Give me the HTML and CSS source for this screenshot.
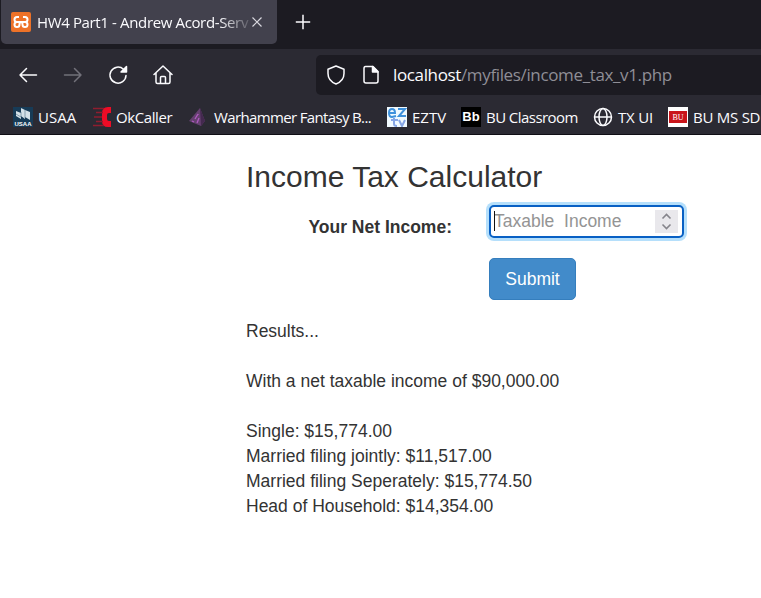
FILE: index.html
```
<!DOCTYPE html>
<html lang="en">
<head>
<meta charset="utf-8">
<title>Income Tax Calculator</title>
<link rel="stylesheet" href="styles.css">
</head>
<body>
<header class="browser">
  <div class="tabs">
    <div class="tab">
      <svg class="favicon" viewBox="0 0 20 20"><rect width="20" height="20" rx="2" fill="#ee7228"/><path d="M8 5H6Q3.500 5 3.500 7.500 3.500 10 6 10q-2.500 0-2.500 2.500T6 15q2.500 0 2.500-2.500 0-2.500 1.500-2.500t1.500 2.500Q11.500 15 14 15t2.500-2.500Q16.500 10 14 10q2.500 0 2.500-2.500Q16.500 5 14 5h-2M6 10h8" fill="none" stroke="#fff" stroke-width="2"/></svg>
      <span class="tab-title">HW4 Part1 - Andrew Acord-Serv</span>
      <svg class="close" viewBox="0 0 10 10"><path d="M.5.5l9 9m0-9l-9 9" fill="none" stroke="#d9d8df" stroke-width="1.200"/></svg>
    </div>
    <svg class="plus" viewBox="0 0 16 16"><path d="M8 .8v14.400M.8 8h14.400" fill="none" stroke="#fbfbfe" stroke-width="1.500"/></svg>
  </div>
  <nav class="toolbar">
    <svg class="tool" viewBox="0 0 20 20"><path d="M18.500 10H2m6.500-6.500L2 10l6.500 6.500"/></svg>
    <svg class="tool disabled" viewBox="0 0 20 20"><path d="M1.500 10H18m-6.500-6.500L18 10l-6.500 6.500"/></svg>
    <svg class="tool" viewBox="0 0 20 20"><path d="M18 10.500A8 8 0 1 1 15.500 4.300"/><path class="solid" d="M18.500 1.500v5.500H13z"/></svg>
    <svg class="tool" viewBox="0 0 20 20"><path d="M1 9.500l9-8.500 9 8.500M3 8v9q0 1.500 1.500 1.500h11q1.500 0 1.500-1.500V8M7.500 18.500v-6q0-1 1-1h3q1 0 1 1v6"/></svg>
    <div class="address">
      <svg class="tool" viewBox="0 0 20 20"><path d="M10 1l8 3.200v4.300c0 4.500-3 8.500-8 10.500-5-2-8-6-8-10.500V4.200z"/></svg>
      <svg class="tool page" viewBox="0 0 20 20"><path d="M4.500 1.500H12l5 5V16q0 2-2 2H5q-2 0-2-2V3.500q0-2 1.500-2z"/><path class="solid" d="M11.500 1.500v5.500H17z"/></svg>
      <span class="url"><b>localhost</b>/myfiles/income_tax_v1.php</span>
    </div>
  </nav>
  <div class="bookmarks">
    <div class="bm usaa"><svg viewBox="0 0 20 20"><rect width="20" height="20" fill="#173b57"/><path d="M3 4l5 2V1l4 2 5 2v8l-5-3v2L8 9v3L3 9z" fill="#d5e1e8"/><path d="M8 5v5m4-7v8M3 7l5 3" stroke="#6f8ca0" stroke-width=".8"/><text x="10" y="19" text-anchor="middle" textLength="17" class="usaa-mark">USAA</text></svg><span>USAA</span></div>
    <div class="bm caller"><svg viewBox="0 0 20 20"><path d="M19 0h-3q-6 0-6 6v8q0 6 6 6h3v-6h-2q-2 0-2-2V8q0-2 2-2h2z" fill="#ee0c26"/><path d="M1 1.500h11M4 5.500h7M2 10h8M4 14.500h7M1 18.500h11" stroke="#8f1d2f" stroke-width="1.300"/></svg><span>OkCaller</span></div>
    <div class="bm warhammer"><svg viewBox="0 0 20 20"><path d="M12 1l5 13-4 5L1 14z" fill="#64406f"/><path d="M12 1l1 18 4-5z" fill="#44294f"/><path d="M10 7l-3 5m4-1l-2 5m-5-2l2 1m4-8v1" fill="none" stroke="#b05ac1" stroke-width="1.300"/></svg><span>Warhammer Fantasy B...</span></div>
    <div class="bm eztv"><svg viewBox="0 0 20 20"><rect width="20" height="20" fill="#f1faff"/><g fill="none" stroke="#3f91dc" stroke-width="2"><path d="M2 6h6q0-4-3-4T2 6t3 4l4-1M11 2h7l-6 7h7"/><path d="M7 11v6q0 2 3 2M4 13h7M12 13l3 6 3-6" stroke="#86a5e5"/></g></svg><span>EZTV</span></div>
    <div class="bm classroom"><svg viewBox="0 0 20 20"><rect width="20" height="20" fill="#000"/><text x="10" y="14" text-anchor="middle" class="bb-mark">Bb</text></svg><span>BU Classroom</span></div>
    <div class="bm tx"><svg viewBox="0 0 20 20"><g fill="none" stroke="#fbfbfe" stroke-width="1.500"><circle cx="10" cy="10" r="8.500"/><ellipse cx="10" cy="10" rx="4" ry="8.500"/><path d="M1.500 10h17"/></g></svg><span>TX UI</span></div>
    <div class="bm bu"><svg viewBox="0 0 20 20"><rect width="20" height="20" fill="#fff"/><rect x="1" y="4" width="18" height="12" fill="#c9151b"/><text x="10" y="13" text-anchor="middle" class="bu-mark">BU</text></svg><span>BU MS SD</span></div>
  </div>
</header>
<main class="content">
  <h1>Income Tax Calculator</h1>
  <form class="form">
    <label for="income">Your Net Income:</label>
    <div class="field">
      <input id="income" type="text" placeholder="Taxable&nbsp; Income">
      <i class="caret"></i>
      <svg class="spinner" viewBox="0 0 23 23"><rect width="23" height="23" fill="#e9e8ec"/><path d="M7.500 8.500l4-4 4 4M7.500 14.500l4 4 4-4" fill="none" stroke="#85848b" stroke-width="1.600"/></svg>
    </div>
    <button type="button">Submit</button>
  </form>
  <section class="results">
    <p>Results...</p>
    <p>With a net taxable income of $90,000.00</p>
    <p>Single: $15,774.00<br>Married filing jointly: $11,517.00<br>Married filing Seperately: $15,774.50<br>Head of Household: $14,354.00</p>
  </section>
</main>
</body>
</html>
```
FILE: styles.css
```
* { box-sizing: border-box; }
body { margin: 0; width: 761px; height: 598px; overflow: hidden; background: #fff; color: #333; font: 17.5px/25px "Liberation Sans", Arial, sans-serif; }
svg { display: block; flex: none; }
.browser { height: 135px; background: #2b2a33; border-bottom: 1px solid #0f0e15; color: #fbfbfe; font-family: "Open Sans", "Noto Sans", sans-serif; white-space: nowrap; overflow: hidden; }
.tabs { display: flex; align-items: center; height: 49px; padding: 0 0 5px 1px; background: #1c1b22; }
.tab { display: flex; align-items: center; width: 276px; height: 44px; padding: 0 0 0 10px; border-radius: 0 0 5px 5px; background: #42414d; }
.favicon { width: 20px; height: 20px; }
.tab-title { width: 212px; margin-left: 6px; font-size: 15px; letter-spacing: -.36px; -webkit-mask-image: linear-gradient(90deg, #000 86%, rgba(0,0,0,.15) 100%); mask-image: linear-gradient(90deg, #000 86%, rgba(0,0,0,.15) 100%); }
.close { width: 10px; height: 10px; margin-left: 3px; }
.plus { width: 16px; height: 16px; margin-left: 18px; }
.toolbar { display: flex; align-items: center; height: 50px; padding: 1px 0 0 18px; gap: 25px; }
.tool { width: 20px; height: 20px; fill: none; stroke: #fbfbfe; stroke-width: 1.5; stroke-linejoin: round; stroke-linecap: round; }
.disabled { stroke: #72717a; }
.solid { fill: #fbfbfe; }
.address { display: flex; align-items: center; flex: 1; height: 40px; margin-left: 118px; padding-left: 10px; border-radius: 5px 0 0 5px; background: #1c1b22; }
.page { margin-left: 15px; }
.url { margin-left: 12px; color: #8f8e96; font-size: 17px; letter-spacing: -.36px; }
.url b { color: #fbfbfe; font-weight: 400; }
.bookmarks { display: flex; align-items: center; height: 36px; padding-left: 13px; font-size: 15px; }
.bm { display: flex; align-items: center; flex: none; gap: 5px; }
.bm svg { width: 20px; height: 20px; }
.usaa { width: 79px; }
.caller { width: 96px; gap: 4px; letter-spacing: -.4px; }
.warhammer { width: 199px; gap: 6px; letter-spacing: -.64px; }
.eztv { width: 74px; }
.classroom { width: 132px; letter-spacing: -.55px; }
.tx { width: 75px; letter-spacing: -.2px; }
.bu { width: 93px; letter-spacing: -.25px; }
.usaa-mark { font: bold 6px "Liberation Sans", sans-serif; letter-spacing: 0; fill: #fff; }
.bb-mark { font: bold 13px "Liberation Sans", sans-serif; letter-spacing: 0; fill: #fff; }
.bu-mark { font: 8px "Liberation Serif", serif; letter-spacing: 0; fill: #fff; }
.content { padding: 25px 0 0 246px; }
h1 { height: 33px; margin: 0; font-size: 30px; line-height: 33px; font-weight: 400; }
.form { display: grid; grid-template-columns: 206px 195px; grid-template-rows: 33px 42px; column-gap: 37px; row-gap: 20px; margin-top: 12px; }
.form label { padding-top: 10px; text-align: right; font-weight: bold; }
.field { position: relative; height: 33px; }
input { display: block; width: 195px; height: 33px; padding: 0 3px; border: 2px solid #0860c4; border-radius: 5px; outline: 0; box-shadow: 0 0 0 3px #b5dffb; background: #fff; font: 17.5px/25px "Liberation Sans", sans-serif; }
input::placeholder { color: #949494; opacity: 1; }
.caret { position: absolute; left: 5px; top: 6px; width: 1px; height: 20px; background: #111; }
.spinner { position: absolute; right: 6px; top: 5px; width: 23px; height: 23px; }
button { grid-column: 2; width: 87px; height: 42px; padding: 0; border: 1px solid #357ebd; border-radius: 5px; background: #428bca; color: #fff; font: 17.5px/25px "Liberation Sans", sans-serif; }
.results { margin-top: 19px; }
.results p { margin: 0 0 25px; }
```
